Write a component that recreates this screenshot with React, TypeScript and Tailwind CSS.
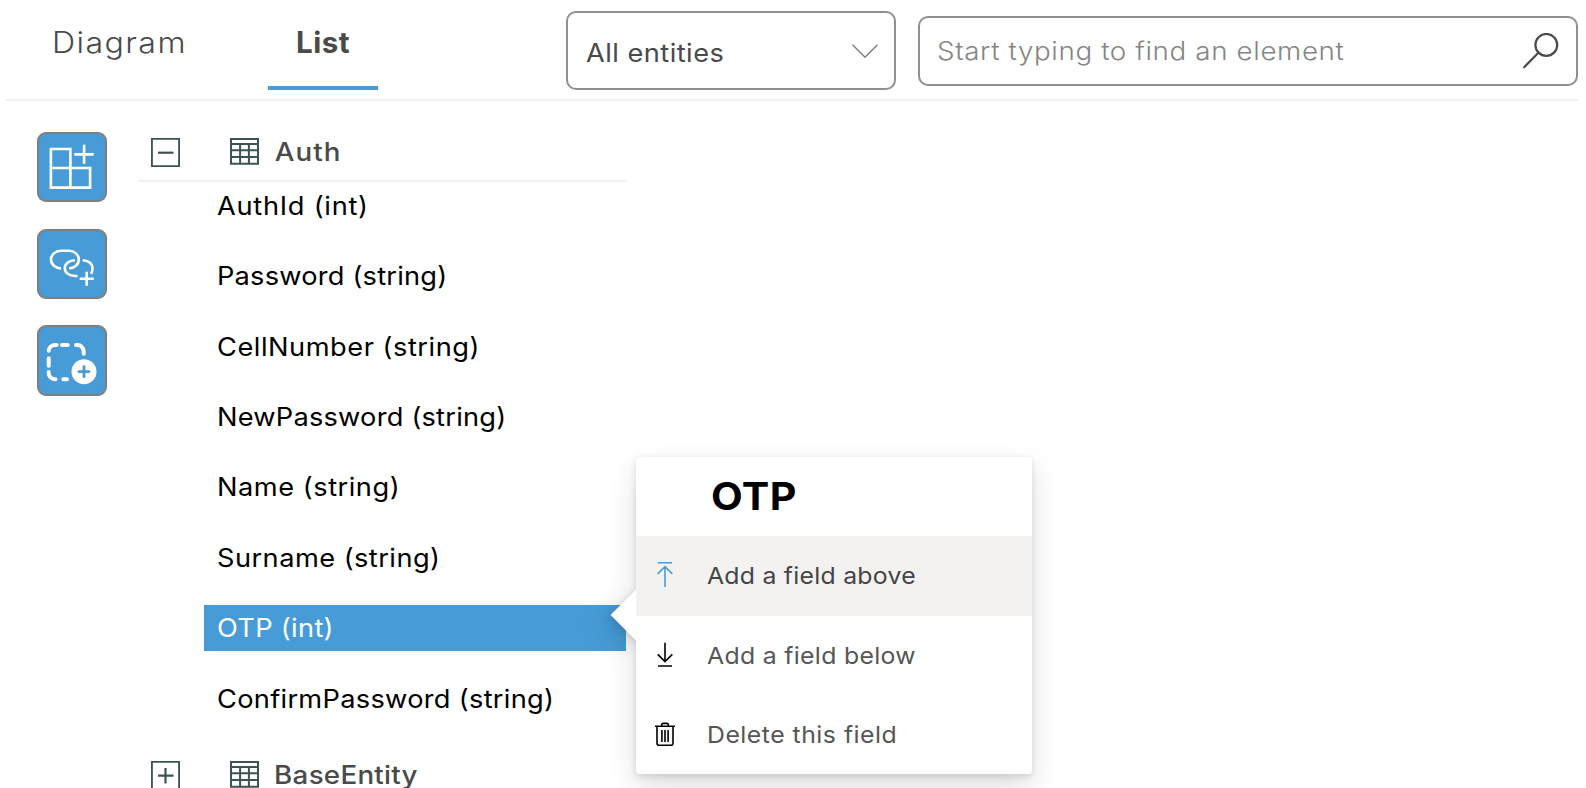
import type { ReactNode } from 'react';

const fields = [
  { label: 'AuthId (int)', className: 'tracking-[0.69px]' },
  { label: 'Password (string)', className: 'tracking-[0.19px]' },
  { label: 'CellNumber (string)', className: 'tracking-[0.49px]' },
  { label: 'NewPassword (string)', className: 'tracking-[0.2px]' },
  { label: 'Name (string)', className: 'tracking-[0.49px]' },
  { label: 'Surname (string)', className: 'tracking-[0.43px]' },
  { label: 'OTP (int)', className: 'tracking-[0.29px]', selected: true },
  { label: 'ConfirmPassword (string)', className: 'tracking-[0.27px]' },
];

function TableIcon() {
  return (
    <svg className="h-[27px] w-[29px]" viewBox="0 0 29 27" fill="none" stroke="#3b5355" strokeWidth="2">
      <path d="M1 1h27v24.800H1zM1 6h27M1 12.300h27M1 18.900h27M10.100 6v20M18.900 6v20" />
    </svg>
  );
}

function ToggleIcon({ open }: { open: boolean }) {
  return (
    <svg className="size-[29px]" viewBox="0 0 29 29" fill="none" stroke="#3b5355" strokeWidth="1.9">
      <path d="M.9.9h27.200v27.200H.9z" />
      <path d={open ? 'M7 14.700h15.500' : 'M7 14.700h15.500M14.500 7v15.500'} strokeWidth="2.200" />
    </svg>
  );
}

function EntityHeader({ name, open, className }: { name: string; open: boolean; className: string }) {
  return (
    <div className="flex h-[58px] w-[489px] items-center border-b-2 border-[#f1f1f1] pl-[13px]">
      <ToggleIcon open={open} />
      <span className="mb-[2px] ml-[50px]">
        <TableIcon />
      </span>
      <span className={`inline-block origin-left scale-x-[1.08] font-medium text-[#4a4a4a] ${className}`}>{name}</span>
    </div>
  );
}

function ToolButton({ className = 'h-[70px]', children }: { className?: string; children: ReactNode }) {
  return (
    <button className={`w-[70px] rounded-[9px] border-2 border-[#808080] bg-[#479cd7] ${className}`}>
      <svg className="-m-[2px] size-[70px]" viewBox="0 0 70 70" fill="none" stroke="#fff" strokeWidth="2.6">
        {children}
      </svg>
    </button>
  );
}

function MenuItem({ label, className, children }: { label: string; className: string; children: ReactNode }) {
  return (
    <div className={`flex items-center pl-[17px] text-[23.4px] ${className}`}>
      <svg className="mr-[29.500px] h-[28px] w-[24px]" viewBox="0 0 24 28" fill="none" stroke="currentColor" strokeWidth="1.6">
        {children}
      </svg>
      <span className="inline-block origin-left scale-x-[1.06]">{label}</span>
    </div>
  );
}

export default function App() {
  return (
    <div className="relative h-[788px] w-[1586px] overflow-hidden bg-white pl-[6px] font-['Inter',sans-serif] text-[25.7px] leading-[36px] whitespace-nowrap text-black">
      <header className="flex h-[101px] w-[1572px] items-start border-b-2 border-[#f1f1f1] text-[#4a4a4a]">
        <nav className="flex w-[560px] text-[29.5px]">
          <div className="w-[262px] pt-[24px] pl-[46px]">
            <span className="inline-block origin-left scale-x-[1.09] font-light tracking-[1.3px]">Diagram</span>
          </div>
          <div className="h-[90px] w-[110px] border-b-4 border-[#479cd7] pt-[24px] pl-[28px] font-bold tracking-[0.5px]">
            List
          </div>
        </nav>
        <div className="mt-[11px] flex h-[79px] w-[330px] items-center justify-between rounded-[10px] border-2 border-[#909090] pr-[16px] pl-[18px]">
          <span className="mt-[4px] inline-block origin-left scale-x-[1.06] tracking-[0.43px]">All entities</span>
          <svg className="h-[14px] w-[26px]" viewBox="0 0 26 14" fill="none" stroke="#808080" strokeWidth="1.5">
            <path d="M.5.8 13 13.200 25.500.8" />
          </svg>
        </div>
        <div className="mt-[16px] ml-[22px] flex h-[70px] w-[660px] items-center justify-between rounded-[10px] border-2 border-[#909090] pr-[17px] pl-[17px]">
          <span className="inline-block origin-left scale-x-[1.08] font-light tracking-[0.58px] text-[#858585]">
            Start typing to find an element
          </span>
          <svg className="h-[36px] w-[36px]" viewBox="0 0 36 36" fill="none" stroke="#4a4a4a" strokeWidth="2.2">
            <circle cx="23.3" cy="11.9" r="10.9" />
            <path d="M15.400 19.800 1.200 34.200" strokeLinecap="round" />
          </svg>
        </div>
      </header>

      <main className="flex">
        <aside className="flex w-[132px] flex-col gap-[26.5px] pt-[31px] pl-[31px]">
          <ToolButton>
            <path d="M13.900 17h19.500v38.600H13.900zM13.900 36h39.200v19.600H33.400M37.300 22.400h19.400M47.100 12.700v19" />
          </ToolButton>
          <ToolButton>
            <path d="M24 39.400c-5.500 0-10-3.900-10-8.800s4.500-8.800 10-8.800h8c5.500 0 9.800 3.900 9.800 8.800s-4.300 8.800-9.800 8.800" />
            <path d="M38 31.200c-5.700 0-10.200 3.500-10.200 8s4.500 7.800 10.200 7.800h2.500M45.700 31.200c5.500 0 9.800 3.500 9.800 8 0 2-.5 4-1.500 5.600M42.700 49.700h14M49.700 42.700v14" />
          </ToolButton>
          <ToolButton className="h-[71px]">
            <path
              d="M19.700 19h-1.700a6.300 6.300 0 0 0-6.300 5.700M25 19h5.700M39 19h1.400a6.300 6.300 0 0 1 6.300 6.300v2.400M11.700 32.300v7.400M11.700 46v1a6.300 6.300 0 0 0 6.300 6.300h.5M26.300 53.300h3.700"
              strokeWidth="4"
              strokeLinecap="round"
            />
            <circle cx="47" cy="45.700" r="12.500" fill="#fff" stroke="none" />
            <path d="M42 45.700h10M47 40.700v10" stroke="#479cd7" strokeWidth="2.800" strokeLinecap="round" />
          </ToolButton>
        </aside>

        <section className="pt-[23px]">
          <EntityHeader name="Auth" open className="pl-[14.5px] tracking-[1px]" />
          <ul className="mt-[0.8px] mb-[25.4px] ml-[66px] flex w-[422px] flex-col gap-[24.43px]">
            {fields.map((field) => (
              <li
                key={field.label}
                className={`flex h-[46px] items-center pl-[13px] ${field.selected ? 'bg-[#479cd7] text-white' : ''}`}
              >
                <span className={`inline-block origin-left scale-x-[1.06] ${field.className}`}>{field.label}</span>
              </li>
            ))}
          </ul>
          <EntityHeader name="BaseEntity" open={false} className="pl-[14px] tracking-[0.25px]" />
        </section>
      </main>

      <div className="absolute top-[457px] left-[636px] h-[317px] w-[396px] rounded-[4px] shadow-[0_12.8px_28.8px_rgba(0,0,0,0.13),0_2.4px_7.2px_rgba(0,0,0,0.11)]">
        <div className="absolute top-[140px] -left-[18px] size-[36px] rotate-45 bg-white shadow-[0_12.8px_28.8px_rgba(0,0,0,0.13),0_2.4px_7.2px_rgba(0,0,0,0.11)]" />
        <div className="relative h-full overflow-hidden rounded-[4px] bg-white">
          <h2 className="flex h-[79px] items-center pb-[2px] pl-[75px] text-[38.5px] font-bold">
            <span className="inline-block origin-left scale-x-[1.07] tracking-[0.4px]">OTP</span>
          </h2>
          <MenuItem label="Add a field above" className="h-[80px] bg-[#f3f2f1] tracking-[0.24px] text-[#444444] [&>svg]:text-[#479cd7]">
            <path d="M5 .8h14M12 5v20M4.700 11.900 12 4.700l7.300 7.200" />
          </MenuItem>
          <MenuItem label="Add a field below" className="h-[80px] tracking-[0.3px] text-[#555555] [&>svg]:text-black">
            <path d="M5 24h14M12 .8v19M4.700 12.400l7.300 7.200 7.300-7.200" />
          </MenuItem>
          <MenuItem label="Delete this field" className="h-[78px] tracking-[0.47px] text-[#555555] [&>svg]:text-black">
            <path d="M2 5.300h20M4 5.300v17a2 2 0 0 0 2 2h12a2 2 0 0 0 2-2v-17M8.700 5V3.700a1.300 1.300 0 0 1 1.300-1.300h4a1.300 1.300 0 0 1 1.300 1.300v1.300M8.900 9v12M12 9v12M15.100 9v12" />
          </MenuItem>
        </div>
      </div>
    </div>
  );
}
